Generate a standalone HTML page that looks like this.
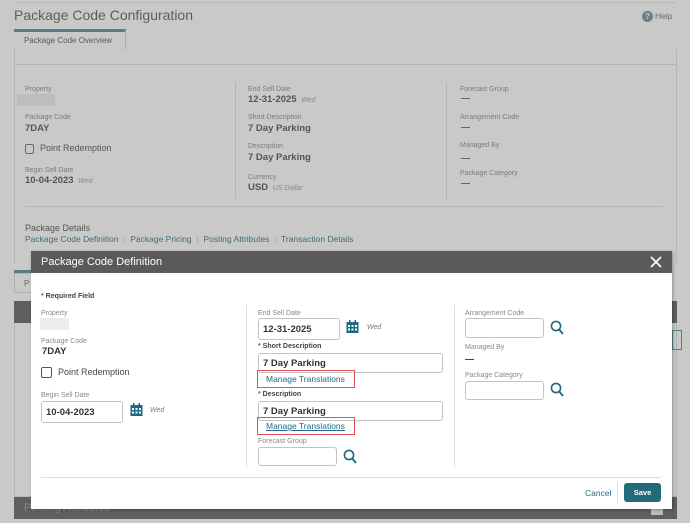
<!DOCTYPE html>
<html><head><style>
*{margin:0;padding:0;box-sizing:border-box}
body{width:690px;height:523px;overflow:hidden;background:#c9c9c7;font-family:"Liberation Sans",sans-serif;position:relative;color:#444}
.a{position:absolute;white-space:nowrap}
.lbl{font-size:7px;color:#8a8a88}
.val{font-size:9.5px;font-weight:bold;color:#4a4a48}
.bg .lbl{color:#7b7b79}
.bg .val{color:#555}
.m .lbl{color:#888}
.m .val{color:#333}
.inp{position:absolute;border:1px solid #c4c4c4;border-radius:3px;background:#fff;font-size:9.5px;font-weight:bold;color:#333;padding:5px 0 0 4px}
.lnk{color:#1e6a85;font-size:8.5px}
.red{position:absolute;border:1.5px solid #e05050}
</style></head><body>
<div class="bg">
<div class="a" style="left:14px;top:0;width:662px;height:3px;border-bottom:1px solid #b8b8b6"></div>
<div class="a" style="left:14px;top:7px;font-size:14px;color:#5d5d5b">Package Code Configuration</div>
<div class="a" style="left:642px;top:11px;width:11px;height:11px;border-radius:50%;background:#6a7f88;color:#ccc;font-size:8px;font-weight:bold;text-align:center;line-height:11px">?</div>
<div class="a" style="left:655px;top:11px;font-size:8.5px;color:#6a6a68">Help</div>
<div class="a" style="left:14px;top:29px;width:112px;height:21px;border-top:3px solid #5a7c84;border-right:1px solid #b0b0ae;font-size:8px;color:#5a5a58;padding:4px 0 0 10px">Package Code Overview</div>
<div class="a" style="left:14px;top:49px;width:663px;height:16px;border:1px solid #b4b4b2;border-top:none;border-left:1px solid #b4b4b2"></div>
<div class="a" style="left:14px;top:64px;width:663px;height:200px;border-left:1px solid #b4b4b2;border-right:1px solid #b4b4b2"></div>
<div class="a lbl" style="left:25px;top:86px">Property</div>
<div class="a" style="left:17px;top:94px;width:38px;height:12px;background:#bdbdbb"></div>
<div class="a lbl" style="left:25px;top:114px">Package Code</div>
<div class="a val" style="left:25px;top:123px">7DAY</div>
<div class="a" style="left:25px;top:144px;width:9px;height:10px;border:1px solid #6a6a68;border-radius:2px"></div>
<div class="a" style="left:40px;top:143px;font-size:9px;color:#555">Point Redemption</div>
<div class="a lbl" style="left:25px;top:167px">Begin Sell Date</div>
<div class="a val" style="left:25px;top:175px">10-04-2023 <i style="font-size:7px;font-weight:normal;color:#888">&nbsp;Wed</i></div>
<div class="a" style="left:235px;top:82px;width:1px;height:117px;background:#b4b4b2"></div>
<div class="a" style="left:446px;top:82px;width:1px;height:117px;background:#b4b4b2"></div>
<div class="a lbl" style="left:248px;top:86px">End Sell Date</div>
<div class="a val" style="left:248px;top:94px">12-31-2025 <i style="font-size:7px;font-weight:normal;color:#888">&nbsp;Wed</i></div>
<div class="a lbl" style="left:248px;top:114px">Short Description</div>
<div class="a val" style="left:248px;top:123px">7 Day Parking</div>
<div class="a lbl" style="left:248px;top:143px">Description</div>
<div class="a val" style="left:248px;top:152px">7 Day Parking</div>
<div class="a lbl" style="left:248px;top:174px">Currency</div>
<div class="a val" style="left:248px;top:182px">USD <i style="font-size:7px;font-weight:normal;color:#888">&nbsp;US Dollar</i></div>
<div class="a lbl" style="left:460px;top:86px">Forecast Group</div><div class="a" style="left:461px;top:98px;width:9px;height:1px;background:#666"></div>
<div class="a lbl" style="left:460px;top:114px">Arrangement Code</div><div class="a" style="left:461px;top:127px;width:9px;height:1px;background:#666"></div>
<div class="a lbl" style="left:460px;top:142px">Managed By</div><div class="a" style="left:461px;top:158px;width:9px;height:1px;background:#666"></div>
<div class="a lbl" style="left:460px;top:170px">Package Category</div><div class="a" style="left:461px;top:183px;width:9px;height:1px;background:#666"></div>
<div class="a" style="left:25px;top:206px;width:638px;height:1px;background:#b4b4b2"></div>
<div class="a" style="left:25px;top:223px;font-size:9px;color:#555">Package Details</div>
<div class="a" style="left:25px;top:234px;font-size:8.5px;color:#3f6b78">Package Code Definition &nbsp;<span style="color:#aaa">|</span>&nbsp; Package Pricing &nbsp;<span style="color:#aaa">|</span>&nbsp; Posting Attributes &nbsp;<span style="color:#aaa">|</span>&nbsp; Transaction Details</div>
<div class="a" style="left:14px;top:270px;width:20px;height:3px;background:#5a7c84"></div>
<div class="a" style="left:14px;top:273px;width:20px;height:20px;border:1px solid #b0b0ae;font-size:8px;color:#5a6e78;padding:5px 0 0 9px">P</div>
<div class="a" style="left:14px;top:301px;width:663px;height:22px;background:#5f5f5d"></div>
<div class="a" style="left:14px;top:323px;width:663px;height:174px;border:1px solid #b4b4b2;border-top:none"></div>
<div class="a" style="left:14px;top:497px;width:663px;height:22px;background:#5f5f5d;color:#8a8a88;font-size:11px;padding:5px 0 0 10px">Posting Attributes</div>
<div class="a" style="left:651px;top:507px;width:12px;height:8px;background:#bbb"></div>
<div class="a" style="left:672px;top:330px;width:10px;height:20px;border:1px solid #5a7c84"></div>
</div>
<div class="m">
<div class="a" style="left:31px;top:251px;width:641px;height:258px;background:#fff;box-shadow:1px 1px 3px rgba(0,0,0,.3)"></div>
<div class="a" style="left:31px;top:251px;width:641px;height:22px;background:#5a5a58;color:#fff;font-size:11px;padding:5px 0 0 10px">Package Code Definition</div>
<svg class="a" style="left:650px;top:256px" width="12" height="12"><path d="M1 1L11 11M11 1L1 11" stroke="#fff" stroke-width="1.6"/></svg>
<div class="a" style="left:41px;top:293px;font-size:7px;font-weight:bold;color:#444"><span style="color:#d33">*</span> Required Field</div>
<div class="a lbl" style="left:41px;top:310px">Property</div>
<div class="a" style="left:40px;top:318px;width:29px;height:12px;background:#ececec"></div>
<div class="a lbl" style="left:41px;top:338px">Package Code</div>
<div class="a val" style="left:42px;top:346px">7DAY</div>
<div class="a" style="left:41px;top:367px;width:11px;height:11px;border:1px solid #555;border-radius:2px"></div>
<div class="a" style="left:58px;top:367px;font-size:9px;color:#444">Point Redemption</div>
<div class="a lbl" style="left:41px;top:392px">Begin Sell Date</div>
<div class="inp" style="left:41px;top:401px;width:82px;height:22px">10-04-2023</div>
<svg class="a" style="left:130px;top:403px" width="13" height="14"><rect x="0.5" y="2" width="12" height="11" fill="#1e6a85"/><g fill="#fff"><rect x="2" y="5" width="2" height="2"/><rect x="5.5" y="5" width="2" height="2"/><rect x="9" y="5" width="2" height="2"/><rect x="2" y="8.5" width="2" height="2"/><rect x="5.5" y="8.5" width="2" height="2"/><rect x="9" y="8.5" width="2" height="2"/></g><rect x="3" y="0" width="1.5" height="3" fill="#1e6a85"/><rect x="8.5" y="0" width="1.5" height="3" fill="#1e6a85"/></svg>
<div class="a" style="left:150px;top:407px;font-size:7px;font-style:italic;color:#777">Wed</div>
<div class="a" style="left:246px;top:305px;width:1px;height:162px;background:#ddd"></div>
<div class="a" style="left:454px;top:305px;width:1px;height:162px;background:#ddd"></div>
<div class="a lbl" style="left:258px;top:310px">End Sell Date</div>
<div class="inp" style="left:258px;top:318px;width:82px;height:22px">12-31-2025</div>
<svg class="a" style="left:346px;top:320px" width="13" height="14"><rect x="0.5" y="2" width="12" height="11" fill="#1e6a85"/><g fill="#fff"><rect x="2" y="5" width="2" height="2"/><rect x="5.5" y="5" width="2" height="2"/><rect x="9" y="5" width="2" height="2"/><rect x="2" y="8.5" width="2" height="2"/><rect x="5.5" y="8.5" width="2" height="2"/><rect x="9" y="8.5" width="2" height="2"/></g><rect x="3" y="0" width="1.5" height="3" fill="#1e6a85"/><rect x="8.5" y="0" width="1.5" height="3" fill="#1e6a85"/></svg>
<div class="a" style="left:367px;top:324px;font-size:7px;font-style:italic;color:#777">Wed</div>
<div class="a" style="left:258px;top:343px;font-size:7px;font-weight:bold;color:#444"><span style="color:#d33">*</span> Short Description</div>
<div class="inp" style="left:258px;top:353px;width:185px;height:20px;padding-top:4px">7 Day Parking</div>
<div class="red" style="left:257px;top:370px;width:98px;height:18px"></div>
<div class="a lnk" style="left:266px;top:374px">Manage Translations</div>
<div class="a" style="left:258px;top:391px;font-size:7px;font-weight:bold;color:#444"><span style="color:#d33">*</span> Description</div>
<div class="inp" style="left:258px;top:401px;width:185px;height:20px;padding-top:4px">7 Day Parking</div>
<div class="red" style="left:257px;top:417px;width:98px;height:18px"></div>
<div class="a lnk" style="left:266px;top:421px;text-decoration:underline">Manage Translations</div>
<div class="a lbl" style="left:258px;top:438px">Forecast Group</div>
<div class="inp" style="left:258px;top:447px;width:79px;height:19px"></div>
<svg class="a" style="left:343px;top:449px" width="14" height="16"><circle cx="6" cy="6" r="4.6" fill="none" stroke="#1e6a85" stroke-width="1.6"/><path d="M9.2 9.5L13 14" stroke="#1e6a85" stroke-width="1.8"/></svg>
<div class="a lbl" style="left:465px;top:310px">Arrangement Code</div>
<div class="inp" style="left:465px;top:318px;width:79px;height:20px"></div>
<svg class="a" style="left:550px;top:320px" width="14" height="16"><circle cx="6" cy="6" r="4.6" fill="none" stroke="#1e6a85" stroke-width="1.6"/><path d="M9.2 9.5L13 14" stroke="#1e6a85" stroke-width="1.8"/></svg>
<div class="a lbl" style="left:465px;top:344px">Managed By</div>
<div class="a" style="left:465px;top:359px;width:9px;height:1px;background:#444"></div>
<div class="a lbl" style="left:465px;top:372px">Package Category</div>
<div class="inp" style="left:465px;top:381px;width:79px;height:19px"></div>
<svg class="a" style="left:550px;top:382px" width="14" height="16"><circle cx="6" cy="6" r="4.6" fill="none" stroke="#1e6a85" stroke-width="1.6"/><path d="M9.2 9.5L13 14" stroke="#1e6a85" stroke-width="1.8"/></svg>
<div class="a" style="left:41px;top:477px;width:620px;height:1px;background:#ddd"></div>
<div class="a" style="left:585px;top:488px;font-size:8.5px;color:#1e6a85">Cancel</div>
<div class="a" style="left:617px;top:482px;width:1px;height:21px;background:#ddd"></div>
<div class="a" style="left:624px;top:483px;width:37px;height:19px;background:#236b7b;border-radius:3px;color:#fff;font-size:7.5px;font-weight:bold;text-align:center;line-height:19px">Save</div>
</div>
</body></html>
